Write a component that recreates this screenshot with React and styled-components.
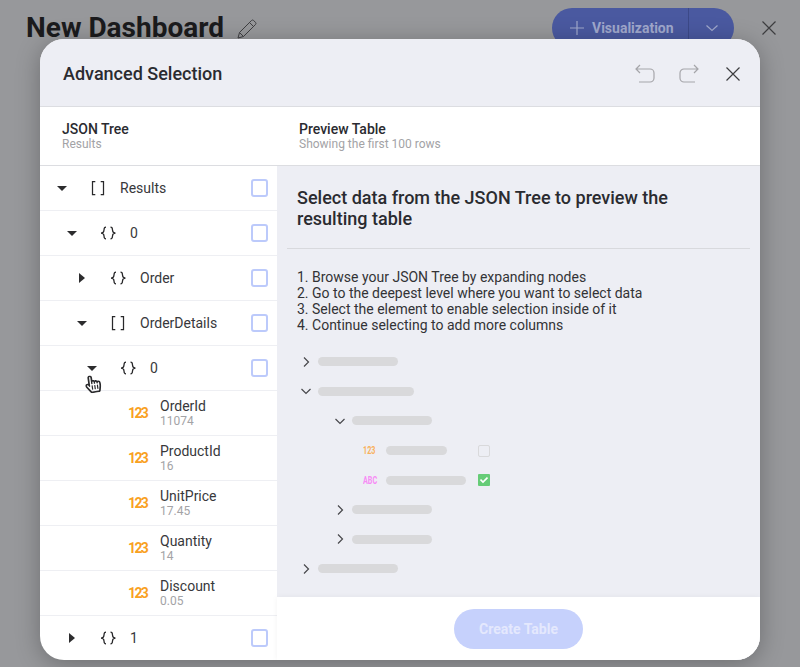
import React from "react";
import styled, { createGlobalStyle } from "styled-components";
import { FaRegHandPointer } from "react-icons/fa";

const Global = createGlobalStyle`
  html, body { margin: 0; padding: 0; background: #97989b; }
  * { box-sizing: border-box; }
  body { font-family: Roboto, "Liberation Sans", sans-serif; }
`;

const Page = styled.div`
  position: relative;
  width: 800px;
  height: 667px;
  overflow: hidden;
  background: #97989b;
`;
const TopBar = styled.header`
  display: flex;
  align-items: center;
  height: 56px;
  padding: 0 24px 0 26px;
`;
const PageTitle = styled.h1`
  margin: 0;
  font-size: 28px;
  font-weight: 700;
  line-height: 56px;
  color: #1b1b1d;
`;
const EditIcon = styled.svg`
  width: 20px;
  height: 20px;
  margin-left: 13px;
  margin-top: 2px;
  fill: none;
  stroke: #3f3f42;
  stroke-width: 1;
`;
const SplitButton = styled.div`
  display: flex;
  height: 40px;
  width: 182px;
  margin-left: auto;
  margin-right: 28px;
  border-radius: 20px;
  background: #4a59a0;
  color: #a0a8cc;
`;
const VizMain = styled.div`
  display: flex;
  align-items: center;
  gap: 8px;
  width: 137px;
  padding-left: 18px;
  border-right: 1px solid #3c4988;
  font-size: 14px;
  font-weight: 700;
`;
const VizArrow = styled.div`
  flex: 1;
  display: flex;
  align-items: center;
  justify-content: center;
`;
const LineIcon = styled.svg`
  display: block;
  flex: none;
  width: ${(p) => p.$size}px;
  height: ${(p) => p.$size}px;
  fill: none;
  stroke: ${(p) => p.$color};
  stroke-width: ${(p) => p.$weight || 1.2};
`;

const Modal = styled.section`
  position: absolute;
  left: 40px;
  top: 39px;
  width: 720px;
  height: 621px;
  display: flex;
  flex-direction: column;
  overflow: hidden;
  border-radius: 24px;
  background: #fff;
  box-shadow: 0 4px 24px rgba(0, 0, 0, 0.28);
`;
const ModalHeader = styled.div`
  flex: none;
  display: flex;
  align-items: center;
  height: 68px;
  padding: 2px 20px 0 23px;
  background: #edeef4;
  border-bottom: 1px solid #dcdde1;
`;
const ModalTitle = styled.h2`
  margin: 0 auto 0 0;
  font-size: 18px;
  font-weight: 500;
  color: #2a2b30;
`;
const HeaderActions = styled.div`
  display: flex;
  align-items: center;
  gap: 24px;
`;
const DialogClose = styled.span`
  margin-left: 3px;
`;
const SubHeader = styled.div`
  flex: none;
  display: grid;
  grid-template-columns: 237px 1fr;
  height: 59px;
  border-bottom: 1px solid #dcdde1;
`;
const SubCell = styled.div`
  padding: 14px 0 0 ${(p) => p.$pad}px;
`;
const SubTitle = styled.div`
  font-size: 14px;
  font-weight: 500;
  line-height: 16px;
  color: #2a2b30;
`;
const SubText = styled.div`
  font-size: 12px;
  line-height: 14px;
  color: #a3a3a6;
`;
const Body = styled.div`
  flex: 1;
  min-height: 0;
  display: grid;
  grid-template-columns: 237px 1fr;
`;
const Tree = styled.div`
  overflow: hidden;
`;
const Row = styled.div`
  display: flex;
  align-items: center;
  height: 45px;
  padding-left: ${(p) => 17 + p.$depth * 10}px;
  padding-right: 9px;
  border-bottom: 1px solid #eeeff3;
  color: #38383b;
  font-size: 14px;
`;
const Arrow = styled.span`
  flex: none;
  width: 10px;
  height: 10px;
  margin-right: 22px;
  display: flex;
  align-items: center;
  justify-content: center;
`;
const ArrowDown = styled.span`
  width: 0;
  height: 0;
  border-left: 5px solid transparent;
  border-right: 5px solid transparent;
  border-top: 5px solid #2c2c2e;
`;
const ArrowRight = styled.span`
  width: 0;
  height: 0;
  border-top: 5px solid transparent;
  border-bottom: 5px solid transparent;
  border-left: 6px solid #2c2c2e;
`;
const TypeIcon = styled.svg`
  flex: none;
  width: 18px;
  height: 18px;
  margin-right: 13px;
  fill: none;
  stroke: #28282a;
  stroke-width: 1.25;
`;
const CheckBox = styled.span`
  flex: none;
  width: 17px;
  height: 18px;
  margin-left: auto;
  border: 2px solid #bccafb;
  border-radius: 3px;
  background: #fff;
`;
const LeafRow = styled.div`
  display: flex;
  align-items: center;
  height: 45px;
  padding-left: 88px;
  border-bottom: 1px solid #eeeff3;
`;
const NumberTag = styled.span`
  flex: none;
  width: 32px;
  font-size: 14px;
  font-weight: 700;
  letter-spacing: -1.6px;
  color: #f9a11f;
`;
const LeafName = styled.div`
  font-size: 14px;
  line-height: 16px;
  color: #38383b;
`;
const LeafValue = styled.div`
  font-size: 12px;
  line-height: 14px;
  color: #a3a3a6;
`;
const Right = styled.div`
  display: flex;
  flex-direction: column;
  min-height: 0;
  background: #edeef4;
`;
const Intro = styled.div`
  flex: 1;
  min-height: 0;
  padding: 21px 10px 0;
  overflow: hidden;
`;
const Heading = styled.h3`
  margin: 0;
  padding: 0 10px 19px;
  font-size: 18px;
  font-weight: 500;
  line-height: 21px;
  color: #2a2b30;
  border-bottom: 1px solid #d8d9dd;
`;
const Steps = styled.ol`
  margin: 20px 0 0;
  padding: 0 0 0 10px;
  list-style: none;
  font-size: 14px;
  line-height: 16px;
  color: #333336;
`;
const Sample = styled.div`
  margin-top: 14px;
  padding-left: 10px;
`;
const SampleRow = styled.div`
  display: flex;
  align-items: center;
  height: 29.6px;
  padding-left: ${(p) => p.$indent}px;
`;
const Chevron = styled.span`
  flex: none;
  width: 18px;
  margin-right: 3px;
  display: flex;
  justify-content: center;
`;
const Bar = styled.span`
  display: block;
  height: 9px;
  width: ${(p) => p.$w}px;
  border-radius: 5px;
  background: #d9d9db;
`;
const SampleTag = styled.span`
  flex: none;
  width: 23px;
  font-size: 10px;
  font-weight: 700;
  transform: scaleX(0.72);
  transform-origin: left center;
  color: ${(p) => p.$color};
`;
const Track = styled.span`
  flex: none;
  width: 92px;
`;
const EmptyBox = styled.span`
  width: 12px;
  height: 12px;
  border: 1px solid #d9d9db;
  border-radius: 2px;
`;
const TickBox = styled.span`
  width: 12px;
  height: 12px;
  border-radius: 1px;
  background: #66cc77;
  display: flex;
  align-items: center;
  justify-content: center;
`;
const Footer = styled.div`
  flex: none;
  height: 63px;
  display: flex;
  align-items: flex-start;
  justify-content: center;
  padding-top: 12px;
  background: #fff;
  box-shadow: 0 0 6px rgba(0, 0, 0, 0.05);
`;
const CreateButton = styled.div`
  width: 129px;
  height: 40px;
  border-radius: 20px;
  background: #c6d1fc;
  color: #e4e8fd;
  font-size: 14px;
  font-weight: 700;
  line-height: 40px;
  text-align: center;
`;
const Cursor = styled.div`
  position: absolute;
  left: 85px;
  top: 375px;
  width: 17px;
  height: 18px;
  color: #2b2b2d;
  svg { display: block; width: 16px; height: 18px; transform: rotate(-8deg); }
`;

const CloseIcon = ({ color = "#3d3d40", size = 14 }) => (
  <LineIcon $size={size} $color={color} $weight={1.2} viewBox="0 0 14 14">
    <path d="M.5.5l13 13M13.500.5l-13 13" />
  </LineIcon>
);
const Brackets = () => (
  <TypeIcon viewBox="0 0 18 18">
    <path d="M6.300 2.500H3.500v13h2.800M11.700 2.500h2.800v13h-2.800" />
  </TypeIcon>
);
const Braces = () => (
  <TypeIcon viewBox="0 0 18 18">
    <path d="M7 3.200C5 3.200 5 4.500 5 6c0 1.800-.5 3-3 3 2.500 0 3 1.200 3 3 0 1.500 0 2.800 2 2.800M11.500 3.200c2 0 2 1.300 2 2.800 0 1.800.5 3 3 3-2.500 0-3 1.200-3 3 0 1.500 0 2.800-2 2.800" />
  </TypeIcon>
);
const ChevR = () => (
  <LineIcon $size={10} $color="#47474b" viewBox="0 0 10 10">
    <path d="M3 .5L7.500 5 3 9.500" />
  </LineIcon>
);
const ChevD = () => (
  <LineIcon $size={10} $color="#47474b" viewBox="0 0 10 10">
    <path d="M.5 3L5 7.500 9.500 3" />
  </LineIcon>
);

const rows = [
  { depth: 0, open: true, kind: "a", label: "Results" },
  { depth: 1, open: true, kind: "o", label: "0" },
  { depth: 2, open: false, kind: "o", label: "Order" },
  { depth: 2, open: true, kind: "a", label: "OrderDetails" },
  { depth: 3, open: true, kind: "o", label: "0" },
];
const leaves = [
  ["OrderId", "11074"],
  ["ProductId", "16"],
  ["UnitPrice", "17.45"],
  ["Quantity", "14"],
  ["Discount", "0.05"],
];

const TreeRow = ({ depth, open, kind, label }) => (
  <Row $depth={depth}>
    <Arrow>{open ? <ArrowDown /> : <ArrowRight />}</Arrow>
    {kind === "a" ? <Brackets /> : <Braces />}
    <span>{label}</span>
    <CheckBox />
  </Row>
);

export default function App() {
  return (
    <Page>
      <Global />
      <TopBar>
        <PageTitle>New Dashboard</PageTitle>
        <EditIcon viewBox="0 0 20 20">
          <path d="M1 19l1.500-5.500L14.500 1.500a1.500 1.500 0 0 1 2.100 0l1.900 1.900a1.500 1.500 0 0 1 0 2.100L6.500 17.500zM2.500 13.500l4 4M12.500 3.500l4 4" />
        </EditIcon>
        <SplitButton>
          <VizMain>
            <LineIcon $size={14} $color="#a0a8cc" viewBox="0 0 14 14">
              <path d="M7 0v14M0 7h14" />
            </LineIcon>
            Visualization
          </VizMain>
          <VizArrow>
            <LineIcon $size={12} $color="#a0a8cc" viewBox="0 0 12 12">
              <path d="M.5 3.500L6 8.500l5.500-5" />
            </LineIcon>
          </VizArrow>
        </SplitButton>
        <CloseIcon />
      </TopBar>
      <Modal>
        <ModalHeader>
          <ModalTitle>Advanced Selection</ModalTitle>
          <HeaderActions>
            <LineIcon $size={20} $color="#a5a5a9" viewBox="0 0 20 20">
              <path d="M5 1L1 5l4 4M1 5h14a4 4 0 0 1 4 4v5a4 4 0 0 1-4 4H4" />
            </LineIcon>
            <LineIcon $size={20} $color="#a5a5a9" viewBox="0 0 20 20">
              <path d="M15 1l4 4-4 4M19 5H5a4 4 0 0 0-4 4v5a4 4 0 0 0 4 4h11" />
            </LineIcon>
            <DialogClose>
              <CloseIcon />
            </DialogClose>
          </HeaderActions>
        </ModalHeader>
        <SubHeader>
          <SubCell $pad={22}>
            <SubTitle>JSON Tree</SubTitle>
            <SubText>Results</SubText>
          </SubCell>
          <SubCell $pad={22}>
            <SubTitle>Preview Table</SubTitle>
            <SubText>Showing the first 100 rows</SubText>
          </SubCell>
        </SubHeader>
        <Body>
          <Tree>
            {rows.map((r, i) => (
              <TreeRow key={i} {...r} />
            ))}
            {leaves.map(([name, value]) => (
              <LeafRow key={name}>
                <NumberTag>123</NumberTag>
                <div>
                  <LeafName>{name}</LeafName>
                  <LeafValue>{value}</LeafValue>
                </div>
              </LeafRow>
            ))}
            <TreeRow depth={1} open={false} kind="o" label="1" />
          </Tree>
          <Right>
            <Intro>
              <Heading>
                Select data from the JSON Tree to preview the
                <br />
                resulting table
              </Heading>
              <Steps>
                <li>1. Browse your JSON Tree by expanding nodes</li>
                <li>2. Go to the deepest level where you want to select data</li>
                <li>3. Select the element to enable selection inside of it</li>
                <li>4. Continue selecting to add more columns</li>
              </Steps>
              <Sample>
                <SampleRow $indent={0}>
                  <Chevron><ChevR /></Chevron>
                  <Bar $w={80} />
                </SampleRow>
                <SampleRow $indent={0}>
                  <Chevron><ChevD /></Chevron>
                  <Bar $w={96} />
                </SampleRow>
                <SampleRow $indent={34}>
                  <Chevron><ChevD /></Chevron>
                  <Bar $w={80} />
                </SampleRow>
                <SampleRow $indent={66}>
                  <SampleTag $color="#f9b05a">123</SampleTag>
                  <Track><Bar $w={61} /></Track>
                  <EmptyBox />
                </SampleRow>
                <SampleRow $indent={66}>
                  <SampleTag $color="#f78cf5">ABC</SampleTag>
                  <Track><Bar $w={80} /></Track>
                  <TickBox>
                    <LineIcon $size={8} $color="#fff" $weight={1.6} viewBox="0 0 8 8">
                      <path d="M.5 3.500L3 6 7.500 1.500" />
                    </LineIcon>
                  </TickBox>
                </SampleRow>
                <SampleRow $indent={34}>
                  <Chevron><ChevR /></Chevron>
                  <Bar $w={80} />
                </SampleRow>
                <SampleRow $indent={34}>
                  <Chevron><ChevR /></Chevron>
                  <Bar $w={80} />
                </SampleRow>
                <SampleRow $indent={0}>
                  <Chevron><ChevR /></Chevron>
                  <Bar $w={80} />
                </SampleRow>
              </Sample>
            </Intro>
            <Footer>
              <CreateButton>Create Table</CreateButton>
            </Footer>
          </Right>
        </Body>
      </Modal>
      <Cursor>
        <FaRegHandPointer />
      </Cursor>
    </Page>
  );
}
